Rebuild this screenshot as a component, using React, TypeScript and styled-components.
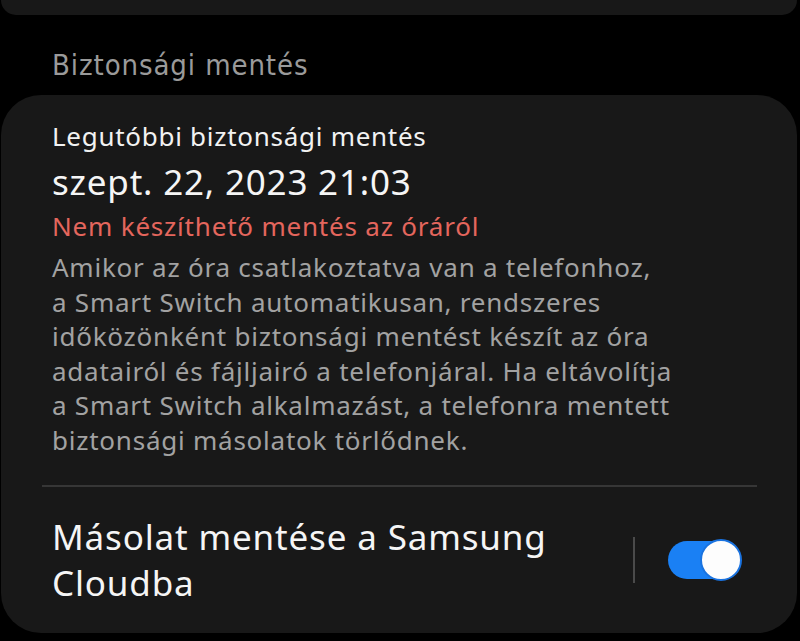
import React from "react";
import styled, { createGlobalStyle } from "styled-components";

const Global = createGlobalStyle`
  html, body { margin: 0; padding: 0; background: #000; }
  body { font-family: "Noto Sans", "Open Sans", sans-serif; -webkit-font-smoothing: antialiased; }
  #root { width: 800px; height: 641px; overflow: hidden; background: #000; }
`;

const Page = styled.div`
  display: flex;
  flex-direction: column;
  padding: 0 3px 0 1px;
`;

const TopCard = styled.div`
  height: 15px;
  background: #181818;
  border-radius: 0 0 34px 34px;
`;

const SectionTitle = styled.div`
  font-family: "DejaVu Sans Condensed", "DejaVu Sans", sans-serif;
  font-stretch: condensed;
  font-size: 29px;
  letter-spacing: 0.9px;
  line-height: 34px;
  color: #9a9a9a;
  padding: 33px 0 13px 51px;
`;

const Card = styled.div`
  background: #181818;
  border-radius: 40px;
  padding: 23px 40px 27px 41px;
  display: flex;
  flex-direction: column;
`;

const Block = styled.div`
  padding: 0 0 0 10px;
  display: flex;
  flex-direction: column;
`;

const Label = styled.div`
  font-size: 26px;
  letter-spacing: 0.72px;
  line-height: 36px;
  color: #f2f2f2;
`;

const DateText = styled.div`
  font-size: 35px;
  letter-spacing: 0.8px;
  line-height: 48px;
  color: #f5f5f5;
  margin-top: 4px;
`;

const ErrorText = styled.div`
  font-size: 26px;
  letter-spacing: 0.8px;
  line-height: 36px;
  color: #e4665d;
  margin-top: 2px;
`;

const Desc = styled.div`
  font-size: 26px;
  letter-spacing: 0.76px;
  line-height: 34.5px;
  color: #a2a2a2;
  margin-top: 6px;
`;

const Divider = styled.div`
  height: 2px;
  background: #363636;
  margin: 28px 0 0 0;
`;

const ToggleRow = styled.div`
  display: flex;
  align-items: center;
  padding: 27px 0 0 10px;
`;

const ToggleLabel = styled.div`
  flex: 1;
  font-size: 35px;
  letter-spacing: 0.84px;
  line-height: 46px;
  color: #f5f5f5;
`;

const VLine = styled.div`
  width: 2px;
  height: 46px;
  background: #4a4a4a;
  margin: 0 33px 0 0;
`;

const Switch = styled.div<{ $on: boolean }>`
  position: relative;
  width: 70px;
  height: 38px;
  border-radius: 19px;
  background: ${(p) => (p.$on ? "#1a80f4" : "#555")};
  margin-right: 19px;
`;

const Knob = styled.div<{ $on: boolean }>`
  position: absolute;
  top: -2px;
  left: ${(p) => (p.$on ? "32px" : "-2px")};
  width: 38px;
  height: 38px;
  border-radius: 50%;
  background: #fdfdfd;
  border: 2px solid #1a73e0;
`;

export default function App() {
  return (
    <>
      <Global />
      <Page>
        <TopCard />
        <SectionTitle>Biztonsági mentés</SectionTitle>
        <Card>
          <Block>
            <Label>Legutóbbi biztonsági mentés</Label>
            <DateText>szept. 22, 2023 21:03</DateText>
            <ErrorText>Nem készíthető mentés az óráról</ErrorText>
            <Desc>
              Amikor az óra csatlakoztatva van a telefonhoz,
              <br />a Smart Switch automatikusan, rendszeres
              <br />időközönként biztonsági mentést készít az óra
              <br />adatairól és fájljairó a telefonjáral. Ha eltávolítja
              <br />a Smart Switch alkalmazást, a telefonra mentett
              <br />biztonsági másolatok törlődnek.
            </Desc>
          </Block>
          <Divider />
          <ToggleRow>
            <ToggleLabel>
              Másolat mentése a Samsung
              <br />
              Cloudba
            </ToggleLabel>
            <VLine />
            <Switch $on={true}>
              <Knob $on={true} />
            </Switch>
          </ToggleRow>
        </Card>
      </Page>
    </>
  );
}
